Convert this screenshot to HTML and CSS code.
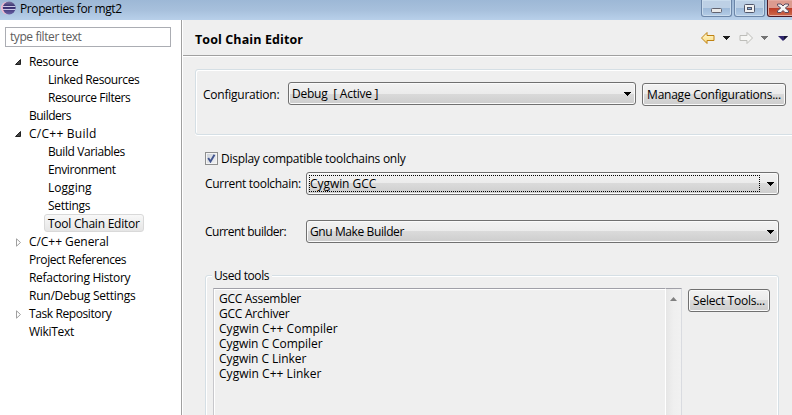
FILE: index.html
```html
<!DOCTYPE html>
<html lang="en">
<head>
<meta charset="utf-8">
<title>Properties for mgt2</title>
<link rel="stylesheet" href="styles.css">
</head>
<body>
<div class="window">
  <header class="titlebar">
    <svg class="logo" width="15" height="14" viewBox="0 0 15 14">
      <defs><linearGradient id="ball" x1="0" y1="0" x2="0" y2="1"><stop offset="0" stop-color="#77709f"/><stop offset=".4" stop-color="#332a6b"/><stop offset="1" stop-color="#6861a5"/></linearGradient></defs>
      <circle cx="6.3" cy="7" r="6.3" fill="#efb9cf"/>
      <circle cx="8.2" cy="7" r="6.4" fill="url(#ball)"/>
      <path d="M2 5.5h12.5M2 8.500h12.500" stroke="#c9c6e6" stroke-width="1"/>
    </svg>
    <span class="caption">Properties for mgt2</span>
    <div class="controls">
      <span class="ctl"><svg width="29" height="16"><rect x="9.5" y="8.5" width="10" height="4" rx="1" fill="#e9e9e9" stroke="#62636f"/></svg></span>
      <span class="ctl"><svg width="29" height="16"><rect x="9.5" y="4.500" width="10" height="8" rx="1" fill="#f1f1f1" stroke="#50566a"/><rect x="12.5" y="7.500" width="4" height="2" fill="#8fb2da" stroke="#50566a"/></svg></span>
      <span class="ctl close"><svg width="29" height="16"><path d="M9.500 4h3.500l2 2 2-2h3.500v1.500L17.300 8l3.200 2.800V12.500H17l-2-2-2 2H9.500v-1.700L12.700 8 9.500 5.500z" fill="#f4f4f4" stroke="#594a5f"/></svg></span>
    </div>
  </header>
  <div class="content">
    <nav class="sidebar">
      <div class="filter">type filter text</div>
      <ul class="tree">
        <li><svg class="tw" width="6" height="6"><path d="M5.500.5v5h-5z" fill="#444" stroke="#222"/></svg><span>Resource</span></li>
        <li class="child"><span class="snug">Linked Resources</span></li>
        <li class="child"><span class="snug">Resource Filters</span></li>
        <li><span class="tight">Builders</span></li>
        <li><svg class="tw" width="6" height="6"><path d="M5.500.5v5h-5z" fill="#444" stroke="#222"/></svg><span class="wide">C/C++ Build</span></li>
        <li class="child"><span class="snug">Build Variables</span></li>
        <li class="child"><span class="snug">Environment</span></li>
        <li class="child"><span class="loose">Logging</span></li>
        <li class="child"><span>Settings</span></li>
        <li class="child selected"><span class="easy">Tool Chain Editor</span></li>
        <li><svg class="tw shut" width="6" height="9"><path d="M.5.8v7.400L4.500 4.500z" fill="#fff" stroke="#a0a0a0"/></svg><span class="open">C/C++ General</span></li>
        <li><span class="snug">Project References</span></li>
        <li><span>Refactoring History</span></li>
        <li><span class="easy">Run/Debug Settings</span></li>
        <li><svg class="tw shut" width="6" height="9"><path d="M.5.8v7.400L4.500 4.500z" fill="#fff" stroke="#a0a0a0"/></svg><span class="snug">Task Repository</span></li>
        <li><span>WikiText</span></li>
      </ul>
    </nav>
    <main class="page">
      <div class="heading">
        <h1>Tool Chain Editor</h1>
        <svg width="92" height="16" viewBox="0 0 92 16">
          <defs><linearGradient id="gold" x1="0" y1="0" x2="0" y2="1"><stop offset="0" stop-color="#fffbd9"/><stop offset="1" stop-color="#fbd878"/></linearGradient></defs>
          <path d="M1.500 8L7 2.500V5.500h7v5H7v3z" fill="url(#gold)" stroke="#bf8212"/>
          <path d="M23 6h7v1h-1v1h-1v1h-1v1h-1V9h-1V8h-1V7h-1z" fill="#1d1d1d"/>
          <path d="M52.500 8L47 2.500V5.500h-7v5h7v3z" fill="#f6f6f4" stroke="#bdbdb9"/>
          <path d="M61 6h7v1h-1v1h-1v1h-1v1h-1V9h-1V8h-1V7h-1z" fill="#737373"/>
          <path d="M78 6h10L83 11z" fill="#30266e"/><path d="M84 6h4l-4 4z" fill="#171533"/>
        </svg>
      </div>
      <section class="config">
        <span class="label easy">Configuration:</span>
        <div class="combo"><span class="easy">Debug&nbsp; [ Active ]</span><svg class="arrow" width="7" height="4"><path d="M0 0h7v1H6v1H5v1H4v1H3V3H2V2H1V1H0z"/></svg></div>
        <div class="button manage"><span class="easy">Manage Configurations...</span></div>
      </section>
      <div class="check">
        <span class="box"><svg width="9" height="9"><path d="M1.200 4l2.300 3.500L7.500.8" fill="none" stroke="#42558f" stroke-width="1.900"/></svg></span>
        <span class="compat">Display compatible toolchains only</span>
      </div>
      <div class="row">
        <span class="label">Current toolchain:</span>
        <div class="combo focus"><span class="open">Cygwin GCC</span><svg class="arrow" width="7" height="4"><path d="M0 0h7v1H6v1H5v1H4v1H3V3H2V2H1V1H0z"/></svg></div>
      </div>
      <div class="row builder">
        <span class="label tight">Current builder:</span>
        <div class="combo"><span class="snug">Gnu Make Builder</span><svg class="arrow" width="7" height="4"><path d="M0 0h7v1H6v1H5v1H4v1H3V3H2V2H1V1H0z"/></svg></div>
      </div>
      <section class="tools">
        <span class="legend snug">Used tools</span>
        <ul class="list">
          <li>GCC Assembler</li>
          <li class="easy">GCC Archiver</li>
          <li class="loose">Cygwin C++ Compiler</li>
          <li class="open">Cygwin C Compiler</li>
          <li class="open">Cygwin C Linker</li>
          <li class="loose">Cygwin C++ Linker</li>
        </ul>
        <div class="scroll"><svg width="7" height="4"><path d="M0 4L3.500 0 7 4z" fill="#808080"/></svg></div>
        <div class="button select"><span class="easy">Select Tools...</span></div>
      </section>
    </main>
  </div>
</div>
</body>
</html>
```
FILE: styles.css
```css
* { box-sizing: border-box; }
body { margin: 0; font: 12px/18px "Open Sans", "Noto Sans", sans-serif; color: #000; letter-spacing: -0.3px; }
ul { list-style: none; margin: 0; padding: 0; }
svg { display: block; flex: none; }
.window { width: 792px; height: 415px; overflow: hidden; display: flex; flex-direction: column; background: #efefef; white-space: nowrap; }
.titlebar { height: 20px; flex: none; display: flex; align-items: flex-start; background: linear-gradient(#9db8d6, #a7c0dc 50%, #b8d0ea); }
.logo { margin: 1px 0 0 1px; }
.caption { margin-left: 4px; line-height: 17px; flex: 1; letter-spacing: -0.4px; }
.controls { display: flex; gap: 2px; width: 91px; flex: none; }
.ctl { width: 31px; height: 17px; flex: none; border: 1px solid #6c86a8; border-top: 0; border-radius: 0 0 3px 3px; background: linear-gradient(#bdd0e5 0 8px, #9db9d8 8px, #b4cce6); box-shadow: inset 0 0 0 1px #cadced; }
.close { border-color: #4c1723; background: linear-gradient(#dc9b8f 0 8px, #bc3c27 8px, #ce6a4b); box-shadow: inset 0 0 0 1px #e3aaa0; }
.content { flex: 1; display: flex; }
.sidebar { width: 183px; background: #fff; border-right: 1px solid #fff; box-shadow: inset -1px 0 #a0a0a0; padding: 7px 0 0 5px; }
.filter { width: 166px; height: 20px; border: 1px solid #abadb3; color: #5d5d5d; padding-left: 4px; line-height: 18px; letter-spacing: -0.42px; }
.tree { padding-top: 5px; }
.tree li { height: 18px; padding-left: 24px; display: flex; line-height: 19px; }
.tree .child { padding-left: 43px; }
.tw { margin: 7px 8px 0 -14px; }
.tw.shut { margin: 6px 7px 0 -13px; }
.tree .selected { margin-left: 39px; width: 100px; padding-left: 3px; border: 1px solid #d9d9d9; border-radius: 3px; background: linear-gradient(#f8f8f8, #e5e5e5); line-height: 17px; }
.tight { letter-spacing: -0.5px; }
.snug { letter-spacing: -0.4px; }
.easy { letter-spacing: -0.24px; }
.open { letter-spacing: -0.06px; }
.loose { letter-spacing: 0.03px; }
.wide { letter-spacing: 0.25px; }
.page { flex: 1; min-width: 0; }
.heading { height: 37px; display: flex; justify-content: space-between; padding-left: 12px; border-bottom: 1px solid #fff; box-shadow: inset 0 -1px #a0a0a0; }
.heading svg { margin-top: 10px; }
h1 { margin: 0; font-size: 12.5px; line-height: 39px; font-weight: 700; letter-spacing: 0.1px; }
.config { margin: 12px 0 0 12px; height: 66px; width: 610px; border: 1px solid #d5dfe5; border-radius: 3px; box-shadow: inset 1px 1px #fff, 0 1px #fff; display: flex; align-items: flex-start; padding: 12px 0 0 7px; }
.config .label { width: 85px; line-height: 26px; flex: none; }
.combo, .button { height: 23px; border: 1px solid #707070; border-radius: 3px; box-shadow: inset 0 0 0 1px #fafafa; background: linear-gradient(#f2f2f2, #ebebeb 50%, #dadada 50%, #cdcdcd); line-height: 22px; flex: none; display: flex; }
.combo { justify-content: space-between; padding: 0 4px 0 3px; }
.config .combo { width: 348px; }
.arrow { margin-top: 9px; }
.manage { width: 144px; margin: 1px 0 0 6px; justify-content: center; }
.check { margin: 14px 0 0 22px; display: flex; height: 19px; line-height: 19px; }
.compat { letter-spacing: -0.27px; }
.box { width: 13px; height: 13px; margin: 3px 3px 0 0; border: 1px solid #8e8f8f; background: linear-gradient(135deg, #cbd0d8, #f4f5f6); box-shadow: inset 0 0 0 1px #f4f4f4; padding: 1px; }
.row { margin: 4px 0 0 22px; display: flex; }
.row .label { width: 101px; line-height: 23px; }
.row .combo { width: 473px; }
.builder { margin-top: 25px; }
.focus { position: relative; }
.focus::after { content: ""; position: absolute; left: 2px; top: 2px; right: 18px; bottom: 2px; border: 1px dotted #000; }
.tools { margin: 32px 0 0 22px; width: 574px; height: 180px; border: 1px solid #d5dfe5; border-radius: 3px; box-shadow: inset 1px 1px #fff, inset -1px 0 #fff; display: flex; position: relative; padding: 12px 0 0 7px; }
.legend { position: absolute; left: 6px; top: -9px; background: #efefef; padding: 0 3px 0 2px; line-height: 18px; }
.list { width: 452px; border: 1px solid #a0a0a8; border-right: 0; border-left-color: #c7c7cb; padding: 2px 0 0 5px; box-shadow: inset 1px 1px #fff; }
.list li { height: 15px; line-height: 15px; }
.scroll { width: 17px; border-top: 1px solid #a0a0a8; border-right: 1px solid #d9dbe0; border-left: 1px solid #fff; background: linear-gradient(90deg, #e6e6e6, #efefef 50%, #f1f1f1); padding: 8px 0 0 4px; }
.select { width: 82px; margin: 1px 0 0 6px; justify-content: center; }
```
